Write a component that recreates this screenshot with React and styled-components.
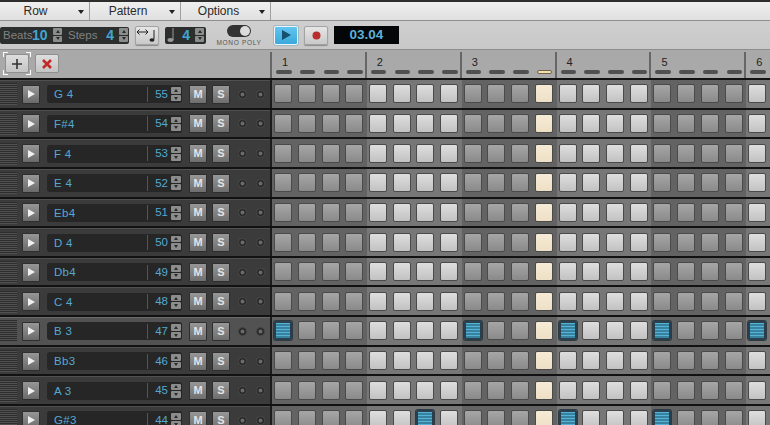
import React from "react";
import styled, { createGlobalStyle } from "styled-components";

const Global = createGlobalStyle`
  html, body { margin: 0; padding: 0; width: 770px; height: 425px; overflow: hidden; background: #2b2b2b; }
  * { box-sizing: border-box; }
  body { font-family: "Liberation Sans", Arial, sans-serif; }
`;

const Page = styled.div`
  width: 770px; height: 425px; overflow: hidden; display: flex; flex-direction: column;
  background: #b4b4b4; border-top: 2px solid #2d2d2d;
`;

const MenuBar = styled.div`
  height: 19px; flex: none; display: flex;
  background: linear-gradient(#efefef, #e0e0e0); border-bottom: 1px solid #8f8f8f;
`;
const Menu = styled.div`
  width: ${p => p.$w}px; height: 18px; flex: none; display: flex; align-items: center; position: relative;
  justify-content: center; padding-right: ${p => p.$pr}px; font-size: 12px; color: #2a2a2a;
  border-right: 1px solid #a0a0a0;
  &::after { content: ""; position: absolute; right: 5px; top: 8px; border: 3.5px solid transparent; border-top: 4px solid #222; border-bottom: 0; }
`;

const Toolbar = styled.div`
  height: 29px; flex: none; display: flex; align-items: center;
  background: linear-gradient(#cfcfcf, #c8c8c8); border-bottom: 1px solid #8e8e8e;
`;
const Pill = styled.div`
  height: 17px; width: ${p => p.$w}px; margin-left: ${p => p.$ml || 0}px; flex: none; display: flex; align-items: center;
  background: #2c2d2d; border-radius: 2px;
`;
const Label = styled.span`
  font-size: 11.5px; color: #7f8384; width: ${p => p.$w}px; padding-left: ${p => p.$pl || 0}px; flex: none;
`;
const BigNum = styled.span`
  font-size: 14px; font-weight: 700; color: #3fa6d2; width: ${p => p.$w}px; flex: none; text-align: ${p => p.$a || "left"};
`;
const SpinCol = styled.div`
  display: flex; flex-direction: column; gap: 1px; width: ${p => p.$w || 9}px; flex: none; margin-left: ${p => p.$ml || 0}px;
`;
const SpinCell = styled.div`
  height: 6.5px; background: #8b8d8d; border-radius: 1px; display: flex; align-items: center; justify-content: center;
  &::after { content: ""; border-left: 2.5px solid transparent; border-right: 2.5px solid transparent;
    ${p => p.$down ? "border-top: 3px solid #2a2a2a;" : "border-bottom: 3px solid #2a2a2a;"} }
`;
const Spin = ({ ml, w }) => (
  <SpinCol $ml={ml} $w={w}><SpinCell /><SpinCell $down /></SpinCol>
);
const ToolButton = styled.div`
  width: ${p => p.$w}px; height: 19px; margin-left: ${p => p.$ml}px; flex: none; display: flex; align-items: center; justify-content: center;
  border-radius: 2px; border: 1px solid #a3a3a3; background: linear-gradient(#e6e6e6, #c9c9c9);
  box-shadow: 0 1px 1px #8a8a8a;
`;
const PlayButton = styled(ToolButton)`
  background: linear-gradient(#62c5ee, #3aa9dc); border: 1px solid #eef6fa; box-shadow: 0 0 0 1px #9fb9c4;
`;
const ModeBox = styled.div`
  width: 50px; margin-left: 8px; flex: none; display: flex; flex-direction: column; align-items: center; gap: 2px; padding-top: 1px;
`;
const Toggle = styled.div`
  width: 24px; height: 12px; border-radius: 6px; background: #333; display: flex; justify-content: flex-end; padding: 1px;
  &::after { content: ""; width: 10px; height: 10px; border-radius: 50%; background: #dcdcdc; }
`;
const ModeText = styled.div`
  font-size: 6.5px; letter-spacing: .7px; color: #555; white-space: nowrap;
`;
const Display = styled.div`
  width: 65px; height: 18px; margin-left: 6px; flex: none; background: #050608; color: #5cb0d8;
  font-size: 13.5px; font-weight: 700; text-align: center; line-height: 18px;
`;

const HeaderRow = styled.div`
  height: 28px; flex: none; display: flex; background: #a9a9a9;
`;
const HeaderLeft = styled.div`
  width: 270px; flex: none; display: flex; align-items: center; gap: 6px; padding: 0 0 1px 5px;
`;
const SmallButton = styled.div`
  width: 24px; height: 19px; border-radius: 2px; border: 1px solid #8f8f8f; flex: none; display: flex; align-items: center; justify-content: center;
  background: linear-gradient(#dedede, #c4c4c4); position: relative;
  ${p => p.$focus ? `
    &::after { content: ""; position: absolute; inset: -3px; pointer-events: none;
      background:
        linear-gradient(#fff,#fff) 0 0/5px 1px no-repeat, linear-gradient(#fff,#fff) 0 0/1px 5px no-repeat,
        linear-gradient(#fff,#fff) 100% 0/5px 1px no-repeat, linear-gradient(#fff,#fff) 100% 0/1px 5px no-repeat,
        linear-gradient(#fff,#fff) 0 100%/5px 1px no-repeat, linear-gradient(#fff,#fff) 0 100%/1px 5px no-repeat,
        linear-gradient(#fff,#fff) 100% 100%/5px 1px no-repeat, linear-gradient(#fff,#fff) 100% 100%/1px 5px no-repeat; }
  ` : ""}
`;
const Ruler = styled.div`
  flex: 1; display: flex; min-width: 0;
`;
const RulerBeat = styled.div`
  width: 94.85px; flex: none; border-left: 2px solid #666; height: 26px; margin-top: 2px; padding: 4px 0 0 10px; display: flex; flex-direction: column;
`;
const BeatNum = styled.div`
  font-size: 11px; line-height: 12px; height: 14px; color: #222;
`;
const Dashes = styled.div`
  display: flex; gap: 8.25px; margin-left: -6px;
`;
const Dash = styled.div`
  width: 15.5px; height: 4px; border-radius: 2px; flex: none; background: ${p => p.$on ? "#f2dfae" : "#505050"};
  border: ${p => p.$on ? "1px solid #6f6248" : "0"};
`;

const Rows = styled.div`
  flex: 1; min-height: 0; background: #111;
`;
const Row = styled.div`
  height: 29.65px; display: flex; border-top: 2px solid #121212; overflow: hidden;
`;
const Left = styled.div`
  width: 270px; flex: none; display: flex; align-items: center;
  background: ${p => p.$sel ? "#525252" : "#3b3b3b"}; border-top: 1px solid ${p => p.$sel ? "#6a6a6a" : "#505050"};
`;
const Grip = styled.div`
  width: 17px; height: 22px; flex: none;
  background: repeating-linear-gradient(#2d2d2d 0 1px, #515151 1px 2px);
`;
const PlaySmall = styled.div`
  width: 18px; height: 19px; margin-left: 5px; flex: none; border-radius: 1px; border: 1px solid #2e2e2e;
  background: linear-gradient(#969696, #6a6a6a); display: flex; align-items: center; justify-content: center;
  &::after { content: ""; border-left: 7px solid #f0f0f0; border-top: 4.5px solid transparent; border-bottom: 4.5px solid transparent; margin-left: 1px; }
`;
const NameField = styled.div`
  width: 135px; height: 18px; margin-left: 7px; flex: none; border-radius: 3px; background: #262626; display: flex; align-items: center;
`;
const NoteName = styled.div`
  font-size: 11.5px; color: #54a9d2; width: 100px; padding-left: 7px; flex: none; letter-spacing: .3px;
`;
const NoteNum = styled.div`
  width: 24px; flex: none; font-size: 11.5px; color: #54a9d2; border-left: 1px solid #555; text-align: right; padding-right: 3px; line-height: 15px;
`;
const MS = styled.div`
  width: 18px; height: 19px; margin-left: ${p => p.$ml}px; flex: none; border-radius: 1px; border: 1px solid #2e2e2e;
  background: linear-gradient(#979797, #6e6e6e); color: #e4e4e4; font-size: 11px; font-weight: 700; text-align: center; line-height: 17px;
`;
const Led = styled.div`
  width: 9px; height: 9px; border-radius: 50%; margin-left: ${p => p.$ml}px; flex: none;
  background: radial-gradient(circle, #6a6a6a 0 1.5px, #1f1f1f 2.5px, #4b4b4b 4.5px);
`;
const Divider = styled.div`
  width: 2px; flex: none; background: #1c1c1c;
`;
const StepArea = styled.div`
  flex: 1; display: flex; min-width: 0;
`;
const Beat = styled.div`
  width: 94.85px; height: 100%; flex: none; display: flex; align-items: center; padding-left: 2px; gap: 5.75px;
  background: ${p => p.$odd ? "#636363" : "#777777"};
`;
const Pad = styled.div`
  width: 18px; height: 19px; flex: none; border-radius: 2px; border: 1px solid #4a4a4a;
  background: ${p => p.$active
    ? "repeating-linear-gradient(#56b3d6 0 1.5px, #37839f 1.5px 3px)"
    : p.$play ? "linear-gradient(#f6ebd6, #eee0c6)"
    : p.$light ? "linear-gradient(#dedede, #c2c2c2)" : "linear-gradient(#a6a6a6, #8a8a8a)"};
  ${p => p.$active ? "box-shadow: 0 0 0 1px #2d3a42; border-color: #2a3f4b; border-width: 2px;" : ""}
`;

const notes = [
  ["G 4", 55], ["F#4", 54], ["F 4", 53], ["E 4", 52], ["Eb4", 51], ["D 4", 50],
  ["Db4", 49], ["C 4", 48], ["B 3", 47], ["Bb3", 46], ["A 3", 45], ["G#3", 44],
];
const active = { 47: [0, 8, 12, 16, 20], 44: [6, 12, 16] };
const beats = [0, 1, 2, 3, 4, 5];
const PLAY = 11;

const PlayIcon = () => (
  <svg width="12" height="12" viewBox="0 0 12 12"><path d="M2 1 L11 6 L2 11 Z" fill="#15506f" /></svg>
);
const LoopIcon = () => (
  <svg width="22" height="15" viewBox="0 0 22 15" fill="none" stroke="#222">
    <path d="M1 4 H12" /><path d="M3.5 1.5 L1 4 L3.5 6.5 M9.5 1.5 L12 4 L9.5 6.5" />
    <path d="M18 2 V11" /><ellipse cx="16" cy="12" rx="2.5" ry="1.7" fill="#222" stroke="none" />
  </svg>
);
const NoteIcon = () => (
  <svg width="12" height="16" viewBox="0 0 12 16" fill="none">
    <path d="M8 1 V13" stroke="#9a9a9a" /><ellipse cx="5.5" cy="13" rx="3" ry="1.9" fill="#9a9a9a" />
  </svg>
);
const Cross = () => (
  <svg width="12" height="12" viewBox="0 0 12 12"><path d="M2 2 L10 10 M10 2 L2 10" stroke="#c22a2a" strokeWidth="2.6" /></svg>
);
const Plus = () => (
  <svg width="12" height="12" viewBox="0 0 12 12"><path d="M6 1 V11 M1 6 H11" stroke="#333" strokeWidth="1.6" /></svg>
);

export default function App() {
  return (
    <Page>
      <Global />
      <MenuBar>
        <Menu $w={90} $pr={18}>Row</Menu>
        <Menu $w={91} $pr={14}>Pattern</Menu>
        <Menu $w={90} $pr={14}>Options</Menu>
      </MenuBar>
      <Toolbar>
        <Pill $w={129}>
          <Label $w={32} $pl={3}>Beats</Label>
          <BigNum $w={18}>10</BigNum>
          <Spin ml={3} />
          <Label $w={37} $pl={6}>Steps</Label>
          <BigNum $w={15} $a="right">4</BigNum>
          <Spin ml={5} />
        </Pill>
        <ToolButton $w={24} $ml={6}><LoopIcon /></ToolButton>
        <Pill $w={41} $ml={6}>
          <NoteIcon />
          <BigNum $w={13} $a="right">4</BigNum>
          <Spin ml={5} />
        </Pill>
        <ModeBox>
          <Toggle />
          <ModeText>MONO POLY</ModeText>
        </ModeBox>
        <PlayButton $w={24} $ml={10}><PlayIcon /></PlayButton>
        <ToolButton $w={24} $ml={6}>
          <svg width="9" height="9" viewBox="0 0 9 9"><circle cx="4.5" cy="4.5" r="4" fill="#b92e2e" /></svg>
        </ToolButton>
        <Display>03.04</Display>
      </Toolbar>
      <HeaderRow>
        <HeaderLeft>
          <SmallButton $focus><Plus /></SmallButton>
          <SmallButton><Cross /></SmallButton>
        </HeaderLeft>
        <Ruler>
          {beats.map(b => (
            <RulerBeat key={b}>
              <BeatNum>{b + 1}</BeatNum>
              <Dashes>
                {[0, 1, 2, 3].map(s => <Dash key={s} $on={b * 4 + s === PLAY} />)}
              </Dashes>
            </RulerBeat>
          ))}
        </Ruler>
      </HeaderRow>
      <Rows>
        {notes.map(([name, num]) => (
          <Row key={num}>
            <Left $sel={num === 47}>
              <Grip />
              <PlaySmall />
              <NameField>
                <NoteName>{name}</NoteName>
                <NoteNum>{num}</NoteNum>
                <Spin ml={0} w={10} />
              </NameField>
              <MS $ml={7}>M</MS>
              <MS $ml={5}>S</MS>
              <Led $ml={8} />
              <Led $ml={9} />
            </Left>
            <Divider />
            <StepArea>
              {beats.map(b => (
                <Beat key={b} $odd={b % 2 === 0}>
                  {[0, 1, 2, 3].map(s => {
                    const i = b * 4 + s;
                    return (
                      <Pad key={s} $light={b % 2 === 1} $play={i === PLAY}
                        $active={(active[num] || []).includes(i)} />
                    );
                  })}
                </Beat>
              ))}
            </StepArea>
          </Row>
        ))}
      </Rows>
    </Page>
  );
}
